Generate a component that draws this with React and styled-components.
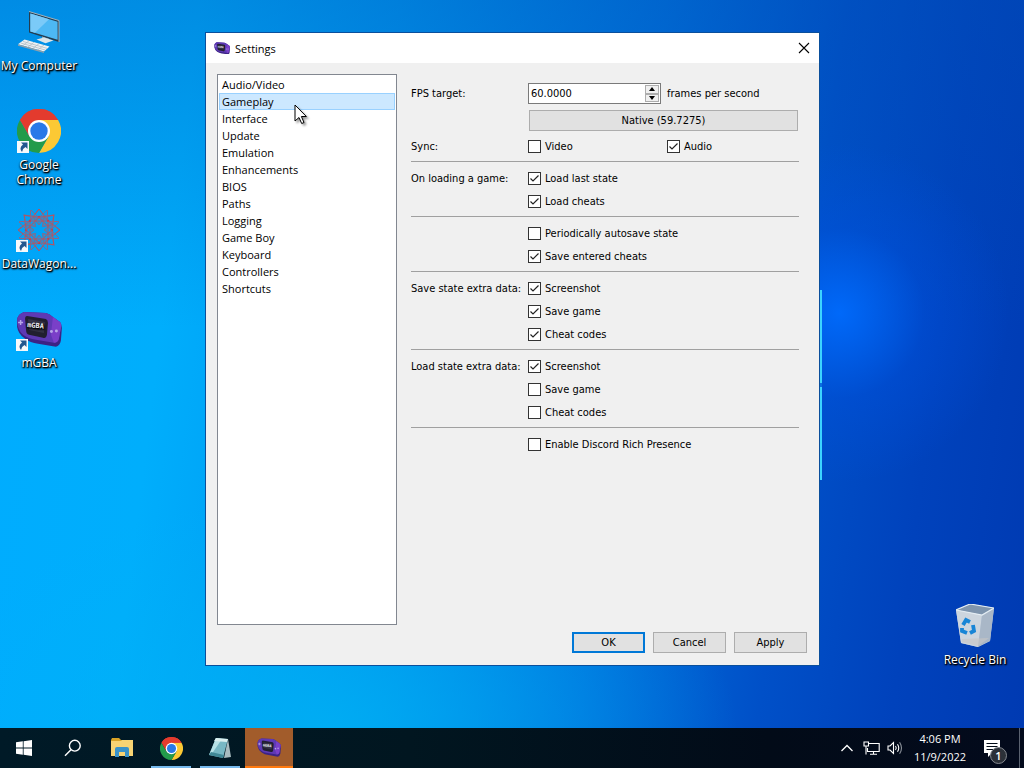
import styled, { createGlobalStyle, css } from "styled-components";

const UI_FONT = `"Open Sans", "Noto Sans", sans-serif`;
const FORM_FONT = `"DejaVu Sans Condensed", "DejaVu Sans", sans-serif`;

const WHITE = "#ffffff";
const BLACK = "#000000";
const PANEL = "#f0f0f0";
const BUTTON = "#e1e1e1";
const BORDER = "#adadad";
const ACCENT = "#0078d7";

const GlobalStyle = createGlobalStyle`
  * {
    box-sizing: border-box;
  }

  body {
    margin: 0;
    font-family: ${UI_FONT};
    font-size: 11px;
    color: ${BLACK};
  }

  button,
  input {
    margin: 0;
    font: inherit;
    color: inherit;
  }
`;

const Screen = styled.div`
  display: flex;
  flex-direction: column;
  min-height: 100vh;
  overflow: hidden;
`;

const Desktop = styled.main`
  position: relative;
  flex: 1;
  display: flex;
  justify-content: space-between;
  padding: 9px 12px 0 2px;
  background:
    radial-gradient(circle 170px at 82% 43%, rgba(0, 108, 255, 0.9), rgba(0, 84, 230, 0.35) 50%, rgba(0, 80, 220, 0)),
    radial-gradient(ellipse 40% 32% at 32% 100%, rgba(0, 178, 244, 0.8), rgba(0, 170, 240, 0)),
    linear-gradient(180deg, rgba(0, 80, 180, 0.35), rgba(0, 90, 190, 0) 45%),
    linear-gradient(97deg, #00acff 0%, #00aefc 18%, #0098f0 36%, #0070dc 60%, #0050c8 76%, #0042bc 88%, #003ab2 100%);
`;

const IconColumn = styled.div`
  display: flex;
  flex-direction: column;

  ${({ $bottom }) =>
    $bottom &&
    css`
      justify-content: flex-end;
      padding-bottom: 26px;
    `}
`;

const Shortcut = styled.a`
  display: flex;
  flex-direction: column;
  align-items: center;
  gap: 3px;
  width: 74px;
  min-height: 99px;
  color: ${WHITE};
  font-size: 12px;
  line-height: 15px;
  text-align: center;
  text-decoration: none;
  text-shadow: 1px 1px 2px ${BLACK}, 0 1px 2px ${BLACK}, 1px 1px 1px ${BLACK};
  white-space: nowrap;
`;

const Picture = styled.span`
  position: relative;
  display: grid;
  place-items: center;
  height: 46px;
`;

const LinkBadge = styled.svg`
  position: absolute;
  left: 0;
  bottom: 1px;
`;

const WindowEdge = styled.div`
  position: absolute;
  right: 202px;
  top: 290px;
  width: 3px;
  height: 190px;
  background: linear-gradient(180deg, #3cd4ff 0 93px, #0a70e0 93px 97px, #3cd4ff 97px);
`;

const Dialog = styled.section`
  position: absolute;
  top: 33px;
  right: 205px;
  bottom: 63px;
  left: 206px;
  display: flex;
  flex-direction: column;
  background: ${PANEL};
  box-shadow: 0 0 0 1px #0a4f9c;
`;

const TitleBar = styled.header`
  display: flex;
  align-items: center;
  gap: 5px;
  height: 30px;
  padding: 0 8px;
  background: ${WHITE};
`;

const Title = styled.h1`
  flex: 1;
  margin: 0;
  font-size: 11px;
  font-weight: 400;
`;

const CloseButton = styled.button`
  display: grid;
  place-items: center;
  padding: 0;
  border: 0;
  background: none;
`;

const DialogBody = styled.div`
  flex: 1;
  display: flex;
  flex-direction: column;
  gap: 7px;
  padding: 11px 12px 12px 11px;
`;

const Columns = styled.div`
  flex: 1;
  display: flex;
  gap: 14px;
`;

const PageList = styled.ul`
  width: 180px;
  margin: 0;
  padding: 1px;
  border: 1px solid #828790;
  background: ${WHITE};
  list-style: none;
`;

const PageButton = styled.button`
  display: block;
  width: 100%;
  height: 17px;
  padding: 0 2px;
  border: 1px solid transparent;
  background: none;
  line-height: 15px;
  text-align: left;

  ${({ $selected }) =>
    $selected &&
    css`
      border-color: #99d1ff;
      background: #cce8ff;
    `}
`;

const Form = styled.form`
  flex: 1;
  display: grid;
  grid-template-columns: 110px 1fr;
  align-content: start;
  gap: 6px 7px;
  padding: 9px 8px 0 0;
  font-family: ${FORM_FONT};
  font-size: 11px;
  line-height: 17px;
  white-space: nowrap;
`;

const Label = styled.label`
  grid-column: 1;
  align-self: center;
`;

const Field = styled.div`
  grid-column: 2;
  display: flex;
  align-items: center;
  gap: 6px;
`;

const Split = styled.div`
  grid-column: 2;
  display: grid;
  grid-template-columns: 1fr 1fr;
  gap: 7px;
  padding-top: 1px;
`;

const Divider = styled.hr`
  grid-column: 1 / -1;
  width: 100%;
  height: 3px;
  margin: 0;
  border: 0;
  border-top: 1px solid #a0a0a0;
`;

const SpinBox = styled.div`
  display: flex;
  width: 133px;
  height: 21px;
  padding: 1px;
  border: 1px solid #7a7a7a;
  background: ${WHITE};
`;

const SpinInput = styled.input`
  flex: 1;
  min-width: 0;
  padding: 0 1px;
  border: 0;
  background: none;
  outline: none;
`;

const SpinButtons = styled.div`
  display: grid;
  grid-template-rows: 1fr 1fr;
  width: 14px;
`;

const SpinButton = styled.button`
  display: grid;
  place-items: center;
  padding: 0;
  border: 1px solid ${BORDER};
  background: ${PANEL};
`;

const PushButton = styled.button`
  width: 73px;
  height: 21px;
  padding: 0;
  border: 1px solid ${BORDER};
  background: ${BUTTON};
  font-family: ${FORM_FONT};
  font-size: 11px;

  ${({ $primary }) =>
    $primary &&
    css`
      border: 2px solid ${ACCENT};
    `}

  ${({ $wide }) =>
    $wide &&
    css`
      flex: 1;
      margin: 0 1px;
    `}
`;

const Footer = styled.footer`
  display: flex;
  justify-content: flex-end;
  gap: 8px;
`;

const CheckLabel = styled.label`
  display: flex;
  align-items: center;
  gap: 4px;
`;

const CheckMark = styled.span`
  display: grid;

  > * {
    grid-area: 1 / 1;
  }

  svg {
    visibility: hidden;
    pointer-events: none;
  }

  input:checked + svg {
    visibility: visible;
  }
`;

const CheckInput = styled.input`
  appearance: none;
  width: 13px;
  height: 13px;
  border: 1px solid #333333;
  background: ${WHITE};
`;

const Pointer = styled.svg`
  position: absolute;
  left: 294px;
  top: 104px;
  filter: drop-shadow(2px 2px 1px rgba(0, 0, 0, 0.4));
`;

const Taskbar = styled.nav`
  display: flex;
  justify-content: space-between;
  height: 40px;
  background: linear-gradient(90deg, #001a27, #011620 40%, #020b18 75%, #030a1c);
  color: ${WHITE};
`;

const Group = styled.div`
  display: flex;
  gap: ${({ $gap }) => $gap}px;
`;

const TaskButton = styled.button`
  display: grid;
  place-items: center;
  width: 48px;
  padding: 0;
  border: 0;
  background: none;

  ${({ $running }) =>
    $running &&
    css`
      background: linear-gradient(#76b9ed, #76b9ed) center bottom / 40px 2px no-repeat;
    `}

  ${({ $attention }) =>
    $attention &&
    css`
      background: #a25c2b;
      box-shadow: inset 0 -2px #ff7a0f;
    `}
`;

const TrayButton = styled.button`
  display: grid;
  place-items: center;
  width: 24px;
  padding: 0;
  border: 0;
  background: none;
`;

const Clock = styled.div`
  width: 66px;
  padding-top: 2px;
  line-height: 18px;
  text-align: center;
  white-space: nowrap;
`;

const Notifications = styled.button`
  position: relative;
  display: grid;
  place-items: center;
  width: 38px;
  margin-right: 8px;
  padding: 0;
  border: 0;
  background: none;
`;

const Count = styled.span`
  position: absolute;
  right: 4px;
  bottom: 4px;
  width: 17px;
  height: 17px;
  border: 1px solid #858990;
  border-radius: 50%;
  background: #2b3038;
  font-weight: 600;
  line-height: 15px;
`;

const ShowDesktop = styled.button`
  width: 5px;
  padding: 0;
  border: 0;
  border-left: 1px solid #5a6270;
  background: none;
`;

const ComputerIcon = () => (
  <svg width="44" height="44" viewBox="0 0 44 44" fill="none">
    <path d="M12 1.5 L42 10.5 V32 L12 22.5Z" fill="#243c50" />
    <path d="M12 1.5 L42 10.5 V32" stroke="#9fb4c0" strokeWidth="1" />
    <path d="M13.4 3.6 L40.6 11.8 V29.8 L13.4 21.4Z" fill="#4db8f4" />
    <path d="M13.4 3.6 L32 9.2 L18 22.8 L13.4 21.4Z" fill="#7bcaf8" />
    <path d="M25 26.5 L32 28.7 V31.5 L25 29.5Z" fill="#9eb0ba" />
    <path d="M19.5 29.5 L27 27.4 L36.5 30.4 L28.5 33.2Z" fill="#dde5e9" />
    <path d="M7.5 29.5 L32.5 36.5 L27 41.5 L1 34.3Z" fill="#eef2f4" />
    <path d="M1 34.3 L27 41.5 V43 L1 35.8Z" fill="#8da0ac" />
    <path d="M5.8 31.4 L30.2 38.4 M3.7 33 L28.2 40 M12 30.8 L6 35.6 M17 32.2 L11 37 M22 33.6 L16 38.4 M27 35 L21 39.8" stroke="#a9b6be" strokeWidth="0.7" />
  </svg>
);

const ChromeIcon = ({ size }) => (
  <svg width={size} height={size} viewBox="0 0 48 48">
    <path d="M24 24 L3.2 12 A24 24 0 0 1 44.8 12Z" fill="#e33b2e" />
    <path d="M24 12 H44.8 A24 24 0 0 1 24 48 L34.4 30Z" fill="#fcc934" />
    <path d="M3.2 12 L13.6 30 L24 36 L34.4 30 L24 48 A24 24 0 0 1 3.2 12Z" fill="#239b4b" />
    <path d="M3.2 12 A24 24 0 0 1 44.8 12 H24 L13.6 30Z" fill="#e33b2e" />
    <circle cx="24" cy="24" r="12" fill="#ffffff" />
    <circle cx="24" cy="24" r="9.5" fill="#2979e8" />
  </svg>
);

const WagonIcon = () => (
  <svg width="46" height="44" viewBox="-23 -22 46 44" fill="none" strokeWidth="1">
    {[0, 45, 90, 135, 180, 225, 270, 315].map((angle) => (
      <g key={angle} transform={`rotate(${angle})`}>
        <path d="M0 -5 L6 -13 L0 -21 L-6 -13Z" stroke="#7d6d8c" />
        <path d="M0 -21 L9 -9 L0 -9 L-9 -9Z" stroke="#b25564" />
        <path d="M-5 -16 L0 -5 L5 -16" stroke="#6b779f" />
        <path d="M-8 -20 L0 -12 L8 -20" stroke="#86688a" />
        <circle cx="0" cy="-13" r="1.2" fill="#c0404e" />
      </g>
    ))}
  </svg>
);

const ConsoleIcon = ({ width }) => (
  <svg width={width} height={width * 0.8} viewBox="0 0 46 37">
    <path d="M1 8 Q2 3 8 1 L30 2 Q34 3 37 6 L44 11 Q46 13 46 17 L45 30 Q44 35 40 36 L22 33 Q14 32 9 28 Q2 23 1 16Z" fill="#3c2385" />
    <path d="M1 8 Q2 3 8 1 L30 2 Q34 3 37 6 L44 11 Q46 13 45 17 L43 28 Q42 32 38 32 L20 29 Q12 28 7 24 Q1 19 1 8Z" fill="#5e39b4" />
    <path d="M37 6 L44 11 Q46 13 45 17 L43 28 Q42 32 38 32 L35 24Z" fill="#7a3fc8" />
    <path d="M11 5 L30 8 Q32 9 32 12 L31 24 Q30 28 27 27 L13 24 Q10 23 10 19 L9 8 Q9 5 11 5Z" fill="#211f30" />
    <path d="M12 8 L29 11 L28 22 L13 19Z" fill="#343246" />
    <text x="11" y="17" fill="#f4f4f8" fontFamily="DejaVu Sans Mono, monospace" fontSize="7" fontWeight="700" transform="rotate(6 20 15)">mGBA</text>
    <path d="M4.5 9 V14 M2 11.5 H7" stroke="#b7a6e8" strokeWidth="1.5" />
    <circle cx="35.5" cy="20.5" r="1.5" fill="#b7a6e8" />
    <circle cx="40.5" cy="20" r="1.5" fill="#b7a6e8" />
  </svg>
);

const BinIcon = () => (
  <svg width="38" height="44" viewBox="0 0 38 44">
    <path d="M0 6 L14 0 L38 4 L34 37 L22 43 L5 39Z" fill="#c2d0de" opacity="0.95" />
    <path d="M0 6 L14 0 L38 4 L26 11Z" fill="#7f95ad" />
    <path d="M0 6 L26 11 L22 43 L5 39Z" fill="#ccd5de" />
    <path d="M26 11 L38 4 L34 37 L22 43Z" fill="#a9b7c7" />
    <path d="M0 6 L14 0 L38 4 L26 11Z" fill="none" stroke="#e4edf3" strokeWidth="1.2" />
    <path d="M6 35 L33 34 L22 42 L6 38Z" fill="#c8c6c4" opacity="0.6" />
    <g fill="none" stroke="#1785d6" strokeWidth="3.8">
      <path d="M7 21 L10 16 L14 18" />
      <path d="M17 21 L18 27 L14 29" />
      <path d="M11 29 L6 27 L6 24" />
    </g>
  </svg>
);

const ShortcutArrow = () => (
  <LinkBadge width="12" height="12" viewBox="0 0 12 12">
    <path d="M0 0 H12 V12 H0Z" fill="#f7f9fb" />
    <path d="M4 1.5 H10.5 V8 L8.5 6 Q5.5 7.5 5 11 Q1.5 7 6 3.5Z" fill="#23578f" />
  </LinkBadge>
);

const FolderIcon = () => (
  <svg width="22" height="20" viewBox="0 0 22 20">
    <path d="M0 2 L1 0 H8 L10 2 H21 V7 H0Z" fill="#d9a326" />
    <path d="M1 3 H10 L11 2 H22 V18 H0 V3Z" fill="#f8d473" />
    <path d="M4 19 V11 Q4 9 6 9 H16 Q18 9 18 11 V19 H14 V14 H8 V19Z" fill="#3a93c9" />
  </svg>
);

const NotepadIcon = () => (
  <svg width="24" height="22" viewBox="0 0 24 22">
    <path d="M20 2 L23 20 L16 21Z" fill="#a9bcc0" />
    <path d="M8 1 L20 2 L15 21 L1 18Z" fill="#78b8c4" />
    <path d="M8 1 L14 2 L3 18 L1 18Z" fill="#b8e2e6" />
    <path d="M8 1 L20 2 L19 5 L6 4Z" fill="#d9eeee" />
    <path d="M1 18 L15 21 L16 18 L3 15Z" fill="#3f8795" />
  </svg>
);

const shortcuts = [
  { label: "My Computer", icon: <ComputerIcon /> },
  { label: "Google Chrome", icon: <ChromeIcon size={44} />, linked: true },
  { label: "DataWagon...", icon: <WagonIcon />, linked: true },
  { label: "mGBA", icon: <ConsoleIcon width={46} />, linked: true },
];

const pages = [
  "Audio/Video",
  "Gameplay",
  "Interface",
  "Update",
  "Emulation",
  "Enhancements",
  "BIOS",
  "Paths",
  "Logging",
  "Game Boy",
  "Keyboard",
  "Controllers",
  "Shortcuts",
];

const Check = ({ children, checked, id }) => (
  <CheckLabel>
    <CheckMark>
      <CheckInput type="checkbox" id={id} defaultChecked={checked} />
      <svg width="13" height="13" viewBox="0 0 13 13" fill="none">
        <path d="M2.5 6.5 L5 9 L10.5 3.5" stroke="#222222" strokeWidth="1.2" />
      </svg>
    </CheckMark>
    {children}
  </CheckLabel>
);

const DesktopShortcut = ({ label, icon, linked }) => (
  <Shortcut href="#">
    <Picture>
      {icon}
      {linked && <ShortcutArrow />}
    </Picture>
    {label === "Google Chrome" ? (
      <span>
        Google
        <br />
        Chrome
      </span>
    ) : (
      <span>{label}</span>
    )}
  </Shortcut>
);

const SettingsForm = () => (
  <Form>
    <Label htmlFor="fps">FPS target:</Label>
    <Field>
      <SpinBox>
        <SpinInput id="fps" type="text" defaultValue="60.0000" />
        <SpinButtons>
          <SpinButton type="button" aria-label="Increase">
            <svg width="6" height="4" viewBox="0 0 6 4">
              <path d="M0 4 L3 0 L6 4Z" />
            </svg>
          </SpinButton>
          <SpinButton type="button" aria-label="Decrease">
            <svg width="6" height="4" viewBox="0 0 6 4">
              <path d="M0 0 L3 4 L6 0Z" />
            </svg>
          </SpinButton>
        </SpinButtons>
      </SpinBox>
      frames per second
    </Field>
    <Field>
      <PushButton type="button" $wide>
        Native (59.7275)
      </PushButton>
    </Field>

    <Label htmlFor="sync-video">Sync:</Label>
    <Split>
      <Check id="sync-video">Video</Check>
      <Check checked>Audio</Check>
    </Split>
    <Divider />

    <Label htmlFor="load-last">On loading a game:</Label>
    <Field>
      <Check id="load-last" checked>Load last state</Check>
    </Field>
    <Field>
      <Check checked>Load cheats</Check>
    </Field>
    <Divider />

    <Field>
      <Check>Periodically autosave state</Check>
    </Field>
    <Field>
      <Check checked>Save entered cheats</Check>
    </Field>
    <Divider />

    <Label htmlFor="save-shot">Save state extra data:</Label>
    <Field>
      <Check id="save-shot" checked>Screenshot</Check>
    </Field>
    <Field>
      <Check checked>Save game</Check>
    </Field>
    <Field>
      <Check checked>Cheat codes</Check>
    </Field>
    <Divider />

    <Label htmlFor="load-shot">Load state extra data:</Label>
    <Field>
      <Check id="load-shot" checked>Screenshot</Check>
    </Field>
    <Field>
      <Check>Save game</Check>
    </Field>
    <Field>
      <Check>Cheat codes</Check>
    </Field>
    <Divider />

    <Field>
      <Check>Enable Discord Rich Presence</Check>
    </Field>
  </Form>
);

const SettingsDialog = () => (
  <Dialog>
    <TitleBar>
      <ConsoleIcon width={16} />
      <Title>Settings</Title>
      <CloseButton aria-label="Close">
        <svg width="14" height="14" viewBox="0 0 14 14">
          <path d="M2 2 L12 12 M12 2 L2 12" stroke="#000000" strokeWidth="1.1" />
        </svg>
      </CloseButton>
    </TitleBar>
    <DialogBody>
      <Columns>
        <PageList>
          {pages.map((page) => (
            <li key={page}>
              <PageButton type="button" $selected={page === "Gameplay"}>
                {page}
              </PageButton>
            </li>
          ))}
        </PageList>
        <SettingsForm />
      </Columns>
      <Footer>
        <PushButton $primary>OK</PushButton>
        <PushButton>Cancel</PushButton>
        <PushButton>Apply</PushButton>
      </Footer>
    </DialogBody>
  </Dialog>
);

const App = () => (
  <Screen>
    <GlobalStyle />
    <Desktop>
      <IconColumn>
        {shortcuts.map((item) => (
          <DesktopShortcut key={item.label} {...item} />
        ))}
      </IconColumn>
      <IconColumn $bottom>
        <DesktopShortcut label="Recycle Bin" icon={<BinIcon />} />
      </IconColumn>
      <WindowEdge />
      <SettingsDialog />
      <Pointer width="14" height="21" viewBox="0 0 14 21">
        <path d="M1 1 V17 L5 13.5 L7.7 19.5 L10 18.5 L7.4 12.5 H12.4Z" fill="#ffffff" stroke="#000000" strokeWidth="1" />
      </Pointer>
    </Desktop>

    <Taskbar>
      <Group $gap={1}>
        <TaskButton aria-label="Start">
          <svg width="16" height="16" viewBox="0 0 16 16" fill="#ffffff">
            <path d="M0 2.3 L6.8 1.3 V7.6 H0Z M7.6 1.2 L16 0 V7.6 H7.6Z M0 8.4 H6.8 V14.7 L0 13.7Z M7.6 8.4 H16 V16 L7.6 14.8Z" />
          </svg>
        </TaskButton>
        <TaskButton aria-label="Search">
          <svg width="18" height="18" viewBox="0 0 18 18" fill="none" stroke="#ffffff" strokeWidth="1.4">
            <circle cx="10.8" cy="6.7" r="5.4" />
            <path d="M7 10.7 L1 16.7" />
          </svg>
        </TaskButton>
        <TaskButton aria-label="File Explorer">
          <FolderIcon />
        </TaskButton>
        <TaskButton aria-label="Google Chrome" $running>
          <ChromeIcon size={23} />
        </TaskButton>
        <TaskButton aria-label="Notepad" $running>
          <NotepadIcon />
        </TaskButton>
        <TaskButton aria-label="mGBA" $attention>
          <ConsoleIcon width={24} />
        </TaskButton>
      </Group>
      <Group $gap={0}>
        <TrayButton aria-label="Show hidden icons">
          <svg width="12" height="8" viewBox="0 0 12 8" fill="none" stroke="#ffffff" strokeWidth="1.3">
            <path d="M0.5 7 L6 1.5 L11.5 7" />
          </svg>
        </TrayButton>
        <TrayButton aria-label="Network">
          <svg width="17" height="14" viewBox="0 0 17 14" fill="none" stroke="#ffffff" strokeWidth="1.1">
            <path d="M6 2.5 H16.2 V10.5 H4.5 V7 M10.5 10.5 V13 M7 13.2 H14" />
            <path d="M1 1 H5.5 V5 H1Z M3 5 V13.5" />
          </svg>
        </TrayButton>
        <TrayButton aria-label="Volume">
          <svg width="16" height="14" viewBox="0 0 16 14" fill="none" stroke="#ffffff" strokeWidth="1.1">
            <path d="M1 5 H3 L6.5 1.5 V12.5 L3 9 H1Z" />
            <path d="M8.5 5 Q10 7 8.5 9 M10.5 3.2 Q13 7 10.5 10.8" />
            <path d="M12.6 1.2 Q16.4 7 12.6 12.8" stroke="#8a9098" />
          </svg>
        </TrayButton>
        <Clock>
          4:06 PM
          <br />
          11/9/2022
        </Clock>
        <Notifications aria-label="Notifications">
          <svg width="18" height="17" viewBox="0 0 18 17">
            <path d="M1 0 H17 V13 H9 L5 17 V13 H1Z" fill="#ffffff" />
            <path d="M3.5 3.5 H14.5 M3.5 6.5 H14.5 M3.5 9.5 H10.5" stroke="#020b18" strokeWidth="1.2" />
          </svg>
          <Count>1</Count>
        </Notifications>
        <ShowDesktop aria-label="Show desktop" />
      </Group>
    </Taskbar>
  </Screen>
);

export default App;
